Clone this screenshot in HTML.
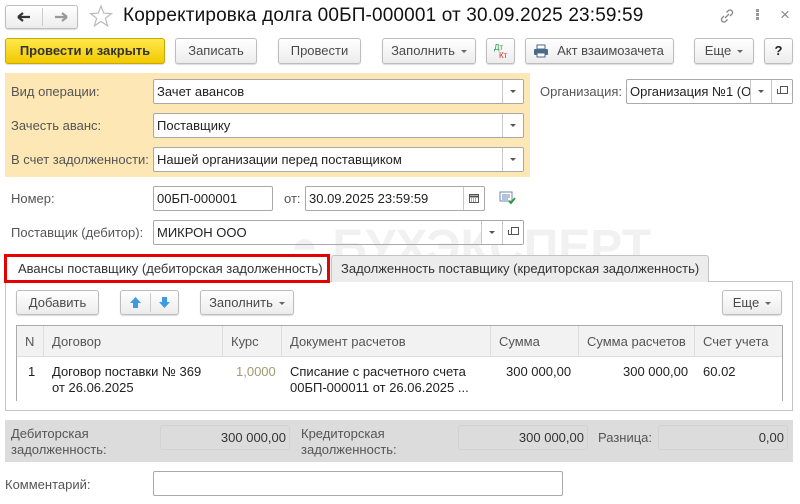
<!DOCTYPE html>
<html><head><meta charset="utf-8"><style>
*{box-sizing:border-box;margin:0;padding:0}
body{width:800px;height:504px;background:#fff;font-family:"Liberation Sans",Arial,sans-serif;font-size:13px;color:#333;position:relative;overflow:hidden}
.a{position:absolute}
.btn{position:absolute;border:1px solid #bdbdbd;border-radius:3px;background:linear-gradient(#fff,#ececec);box-shadow:0 1px 1px rgba(0,0,0,.15);text-align:center;line-height:23px;color:#4a4a4a;font-size:13px;white-space:nowrap}
.inp{position:absolute;border:1px solid #a9a9a9;border-radius:2px;background:#fff;height:25px;line-height:23px;padding-left:3px;color:#222;white-space:nowrap;overflow:hidden}
.dd{position:absolute;top:0;bottom:0;width:21px;border-left:1px solid #c8c8c8;background:#fff}
.dd:after{content:"";position:absolute;left:7px;top:10px;border-left:3px solid transparent;border-right:3px solid transparent;border-top:3px solid #555}
.op{position:absolute;top:0;bottom:0;width:21px;border-left:1px solid #c8c8c8;background:#fff}
.op:before{content:"";position:absolute;left:8px;top:6px;width:6px;height:6px;border:1px solid #555}
.op:after{content:"";position:absolute;left:5px;top:9px;width:4px;height:4px;border-left:1px solid #555;border-bottom:1px solid #555}
.lbl{position:absolute;color:#555;white-space:nowrap}
.car{display:inline-block;border-left:3px solid transparent;border-right:3px solid transparent;border-top:3px solid #666;vertical-align:middle;margin-left:6px}
.th{position:absolute;top:0;height:31px;line-height:31px;border-right:1px solid #dcdcdc;padding-left:8px;color:#555}
.ro{position:absolute;background:#dcdcdc;border:1px solid #d2d2d2;border-radius:3px;height:25px;line-height:23px;text-align:right;padding-right:3px;color:#333}
</style></head><body>
<div class="btn" style="left:5px;top:5px;width:73px;height:24px;padding:0"><span class="a" style="left:36px;top:2px;bottom:2px;border-left:1px solid #ccc"></span>
<svg class="a" style="left:11px;top:6px" width="14" height="10"><path d="M1 5H13M1 5L6 1M1 5L6 9" stroke="#333" stroke-width="2.2" fill="none"/></svg>
<svg class="a" style="left:48px;top:6px" width="14" height="10"><path d="M13 5H1M13 5L8 1M13 5L8 9" stroke="#999" stroke-width="2.2" fill="none"/></svg></div>
<svg class="a" style="left:89px;top:4px" width="24" height="24"><path d="M12 2L14.8 9.2L22.5 9.5L16.4 14.3L18.6 21.8L12 17.5L5.4 21.8L7.6 14.3L1.5 9.5L9.2 9.2Z" fill="none" stroke="#bbb" stroke-width="1.2"/></svg>
<div class="a" style="left:123px;top:5px;font-size:19px;color:#111;white-space:nowrap;letter-spacing:0.15px">Корректировка долга 00БП-000001 от 30.09.2025 23:59:59</div>
<svg class="a" style="left:718px;top:7px" width="18" height="18"><path d="M7 11L11 7M6 9L4 11a2.5 2.5 0 0 0 3.5 3.5L9.5 12.5M12 9l2-2a2.5 2.5 0 0 0-3.5-3.5L8.5 5.5" stroke="#888" stroke-width="1.3" fill="none"/></svg>
<div class="a" style="left:756px;top:9px;width:3px;height:3px;background:#999;box-shadow:0 4px #999,0 8px #999"></div>
<div class="a" style="left:780px;top:5px;font-size:17px;color:#888">×</div>
<div class="btn" style="left:5px;top:38px;width:160px;height:26px;background:linear-gradient(#ffe84a,#f2c900);border-color:#c9a800;font-weight:bold;color:#333">Провести и закрыть</div>
<div class="btn" style="left:175px;top:38px;width:82px;height:26px">Записать</div>
<div class="btn" style="left:278px;top:38px;width:83px;height:26px">Провести</div>
<div class="btn" style="left:382px;top:38px;width:94px;height:26px">Заполнить<span class="car"></span></div>
<div class="btn" style="left:486px;top:38px;width:29px;height:26px;font-size:8px;line-height:9px"><span class="a" style="left:7px;top:4px;color:#1a9a3a">Дт</span><span class="a" style="left:12px;top:12px;color:#d03030">Кт</span></div>
<div class="btn" style="left:525px;top:38px;width:149px;height:26px;padding-left:22px"><svg class="a" style="left:7px;top:5px" width="16" height="14"><rect x="4" y="1" width="8" height="4" fill="#fff" stroke="#4a6a8a"/><rect x="1" y="5" width="14" height="6" rx="1" fill="#4a6a8a"/><rect x="4" y="9" width="8" height="4" fill="#fff" stroke="#4a6a8a"/></svg>Акт взаимозачета</div>
<div class="btn" style="left:694px;top:38px;width:60px;height:26px">Еще<span class="car"></span></div>
<div class="btn" style="left:764px;top:38px;width:29px;height:26px;font-weight:bold;color:#222">?</div>
<div class="a" style="left:5px;top:73px;width:525px;height:104px;background:#fce7b5"></div>
<div class="lbl" style="left:11px;top:84px">Вид операции:</div>
<div class="inp" style="left:153px;top:79px;width:371px">Зачет авансов<div class="dd" style="right:0"></div></div>
<div class="lbl" style="left:11px;top:118px">Зачесть аванс:</div>
<div class="inp" style="left:153px;top:113px;width:371px">Поставщику<div class="dd" style="right:0"></div></div>
<div class="lbl" style="left:11px;top:152px">В счет задолженности:</div>
<div class="inp" style="left:153px;top:147px;width:371px">Нашей организации перед поставщиком<div class="dd" style="right:0"></div></div>
<div class="lbl" style="left:540px;top:84px">Организация:</div>
<div class="inp" style="left:626px;top:79px;width:167px">Организация №1 (ОО<div class="dd" style="right:21px"></div><div class="op" style="right:0"></div></div>
<div class="lbl" style="left:11px;top:191px">Номер:</div>
<div class="inp" style="left:153px;top:186px;width:120px">00БП-000001</div>
<div class="lbl" style="left:284px;top:191px">от:</div>
<div class="inp" style="left:305px;top:186px;width:180px">30.09.2025 23:59:59<div class="a" style="right:0;top:0;bottom:0;width:21px;border-left:1px solid #c8c8c8"><svg class="a" style="left:5px;top:6px" width="10" height="10"><rect x="0.5" y="1.5" width="9" height="8" fill="none" stroke="#555"/><path d="M0 3.5H10" stroke="#555" stroke-width="2"/><path d="M2 6h6M2 8h6" stroke="#555" stroke-dasharray="1 1"/></svg></div></div>
<svg class="a" style="left:499px;top:191px" width="18" height="14"><rect x="1" y="1" width="12" height="9" fill="#fff" stroke="#6a8ab0"/><path d="M3 4h8M3 6h8M3 8h6" stroke="#6a8ab0"/><path d="M10 10l2 2 4-5" stroke="#2a9a2a" stroke-width="1.8" fill="none"/></svg>
<div class="a" style="left:290px;top:220px;font-size:48px;font-weight:bold;color:#f1f1f1;white-space:nowrap">◓ БУХЭКСПЕРТ</div>
<div class="lbl" style="left:11px;top:225px">Поставщик (дебитор):</div>
<div class="inp" style="left:153px;top:220px;width:371px;background:transparent">МИКРОН ООО<div class="dd" style="right:21px"></div><div class="op" style="right:0"></div></div>
<div class="a" style="left:5px;top:281px;width:788px;height:130px;border:1px solid #c4c4c4"></div>
<div class="a" style="left:331px;top:255px;width:378px;height:27px;background:#ececec;border:1px solid #c4c4c4;border-bottom:none;border-radius:3px 3px 0 0;line-height:26px;padding-left:9px;color:#333">Задолженность поставщику (кредиторская задолженность)</div>
<div class="a" style="left:4px;top:254px;width:326px;height:29px;border:3px solid #e60000;background:#fff;line-height:23px;padding-left:11px;color:#333">Авансы поставщику (дебиторская задолженность)</div>
<div class="btn" style="left:16px;top:290px;width:83px;height:25px">Добавить</div>
<div class="btn" style="left:120px;top:290px;width:59px;height:25px"><span class="a" style="left:29px;top:2px;bottom:2px;border-left:1px solid #ccc"></span>
<svg class="a" style="left:8px;top:5px" width="13" height="13"><path d="M6.5 1L12 7H9V12H4V7H1Z" fill="#3c9be0"/></svg>
<svg class="a" style="left:37px;top:5px" width="13" height="13"><path d="M6.5 12L12 6H9V1H4V6H1Z" fill="#3c9be0"/></svg></div>
<div class="btn" style="left:200px;top:290px;width:94px;height:25px">Заполнить<span class="car"></span></div>
<div class="btn" style="left:722px;top:290px;width:60px;height:25px">Еще<span class="car"></span></div>
<div class="a" style="left:16px;top:325px;width:767px;height:76px;border:1px solid #aaa;border-bottom:none;background:#fff">
<div class="a" style="left:0;top:0;right:0;height:31px;background:#f2f2f2;border-bottom:1px solid #dcdcdc"></div>
<div class="th" style="left:0;width:27px">N</div>
<div class="th" style="left:27px;width:179px">Договор</div>
<div class="th" style="left:206px;width:59px">Курс</div>
<div class="th" style="left:265px;width:209px">Документ расчетов</div>
<div class="th" style="left:474px;width:88px">Сумма</div>
<div class="th" style="left:562px;width:116px">Сумма расчетов</div>
<div class="th" style="left:678px;width:88px;border:none">Счет учета</div>
<div class="a" style="left:11px;top:38px;color:#222">1</div>
<div class="a" style="left:35px;top:38px;line-height:16px;color:#222">Договор поставки № 369<br>от 26.06.2025</div>
<div class="a" style="left:219px;top:38px;color:#a09a70">1,0000</div>
<div class="a" style="left:273px;top:38px;line-height:16px;color:#222">Списание с расчетного счета<br>00БП-000011 от 26.06.2025 ...</div>
<div class="a" style="left:489px;top:38px;color:#222">300 000,00</div>
<div class="a" style="left:606px;top:38px;color:#222">300 000,00</div>
<div class="a" style="left:686px;top:38px;color:#222">60.02</div>
</div>
<div class="a" style="left:5px;top:420px;width:788px;height:42px;background:#dcdcdc"></div>
<div class="lbl" style="left:11px;top:426px;line-height:16px">Дебиторская<br>задолженность:</div>
<div class="ro" style="left:160px;top:425px;width:130px">300 000,00</div>
<div class="lbl" style="left:301px;top:426px;line-height:16px">Кредиторская<br>задолженность:</div>
<div class="ro" style="left:458px;top:425px;width:130px">300 000,00</div>
<div class="lbl" style="left:598px;top:430px">Разница:</div>
<div class="ro" style="left:658px;top:425px;width:130px">0,00</div>
<div class="lbl" style="left:5px;top:477px">Комментарий:</div>
<div class="inp" style="left:153px;top:471px;width:410px"></div>
</body></html>
